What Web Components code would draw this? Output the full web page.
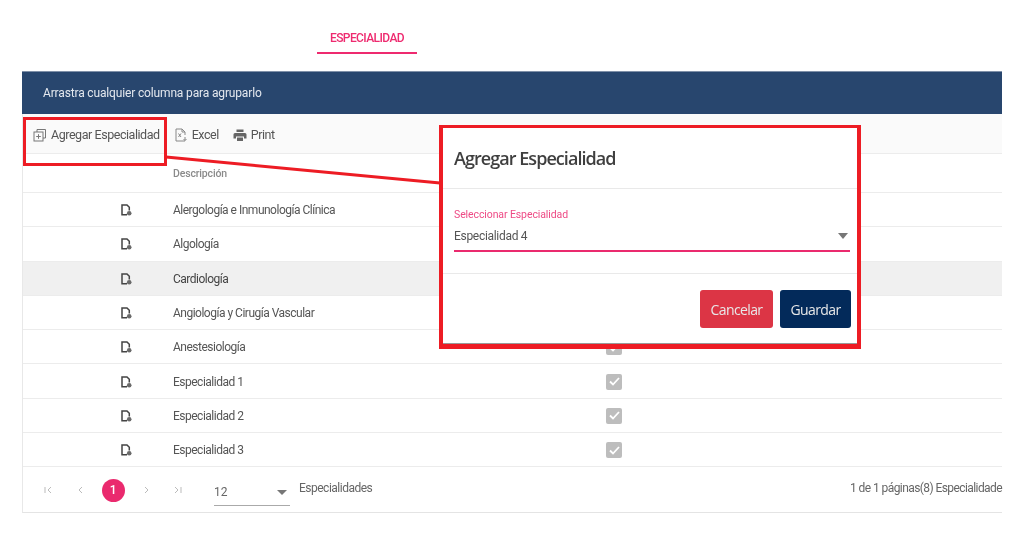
<!DOCTYPE html>
<html lang="es">
<head>
<meta charset="utf-8">
<title>Especialidad</title>
<style>
  html, body { margin: 0; background: #fff; }
  body { width: 1024px; height: 538px; overflow: hidden; position: relative; font-family: Roboto, "Liberation Sans", sans-serif; filter: blur(0.35px); }
</style>
</head>
<body>
<page-tabs label="ESPECIALIDAD"></page-tabs>
<data-grid>
  <grid-row name="Alergología e Inmunología Clínica"></grid-row>
  <grid-row name="Algología"></grid-row>
  <grid-row name="Cardiología" selected></grid-row>
  <grid-row name="Angiología y Cirugía Vascular"></grid-row>
  <grid-row name="Anestesiología"></grid-row>
  <grid-row name="Especialidad 1"></grid-row>
  <grid-row name="Especialidad 2"></grid-row>
  <grid-row name="Especialidad 3"></grid-row>
</data-grid>
<add-dialog></add-dialog>
<call-out></call-out>

<script>
class PageTabs extends HTMLElement {
  constructor() {
    super();
    this.attachShadow({ mode: 'open' });
    this.shadowRoot.innerHTML = `
      <style>
        :host { display: flex; height: 71px; padding-left: 317px; box-sizing: border-box; }
        .tab {
          width: 100px;
          height: 54px;
          box-sizing: border-box;
          padding-top: 31px;
          text-align: center;
          font: 500 12px/15px Roboto, sans-serif;
          letter-spacing: -0.6px;
          color: #ee2a6f;
          border-bottom: 2px solid #ee2a6f;
        }
      </style>
      <div class="tab">${this.getAttribute('label')}</div>
    `;
  }
}
customElements.define('page-tabs', PageTabs);

class DataGrid extends HTMLElement {
  constructor() {
    super();
    this.attachShadow({ mode: 'open' });
    this.shadowRoot.innerHTML = `
      <style>
        :host {
          display: block;
          width: 980px;
          margin-left: 22px;
          box-sizing: border-box;
          border-left: 1px solid #e8e8e8;
          border-bottom: 1px solid #e4e4e4;
          color: #555;
          font: 12px Roboto, sans-serif;
        }
        .group {
          height: 43px;
          box-sizing: border-box;
          margin-left: -1px;
          padding: 0 0 1px 21px;
          display: flex;
          align-items: center;
          background: #28466e;
          border-top: 1px solid #7f90a8;
          letter-spacing: -0.15px;
          color: #e4e8ee;
        }
        .toolbar {
          height: 40px;
          box-sizing: border-box;
          display: flex;
          align-items: center;
          padding: 2px 0 0 10px;
          background: #fafafa;
          border-bottom: 1px solid #ececec;
          font-size: 12.5px;
          letter-spacing: -0.45px;
          color: #555;
        }
        .tool { display: flex; align-items: center; gap: 4px; }
        .tool svg { display: block; }
        .tool.add { margin-right: 14px; }
        .tool.excel { margin-right: 14px; }
        .head {
          height: 39px;
          box-sizing: border-box;
          padding: 13px 0 0 150px;
          border-bottom: 1px solid #ececec;
          font-size: 10.5px;
          font-weight: 500;
          letter-spacing: -0.15px;
          color: #8a8a8a;
        }
      </style>
      <div class="group">Arrastra cualquier columna para agruparlo</div>
      <div class="toolbar">
        <div class="tool add">
          <svg width="14" height="14" viewBox="0 0 14 14" fill="none" stroke="#777" stroke-width="1">
            <rect x="1" y="4" width="9" height="9"/>
            <path d="M4 4V1.5h8.5V10H10M3.2 8.5h4.6M5.500 6.200v4.600"/>
          </svg>
          Agregar Especialidad
        </div>
        <div class="tool excel">
          <svg width="14" height="14" viewBox="0 0 14 14" fill="none" stroke="#888" stroke-width="1">
            <path d="M2 1h6l3 3v3M2 1v12h9M8 1v3h3M4.500 5.500l2.500 3.500M7 5.500l-2.500 3.500M11 9v3.500M9.500 11l1.500 1.500 1.500-1.500"/>
          </svg>
          Excel
        </div>
        <div class="tool print">
          <svg width="14" height="14" viewBox="0 0 14 14" fill="#666">
            <path d="M3.500 1.500h7v2.500h-7zM2 5h10a1.500 1.500 0 0 1 1.500 1.500V10.500h-2.500V8.500H3v2H.5V6.500A1.500 1.500 0 0 1 2 5zM4 9.500h6V13H4z"/>
          </svg>
          Print
        </div>
      </div>
      <div class="head">Descripción</div>
      <slot></slot>
      <grid-pager></grid-pager>
    `;
  }
}
customElements.define('data-grid', DataGrid);

class GridRow extends HTMLElement {
  constructor() {
    super();
    this.attachShadow({ mode: 'open' });
    this.shadowRoot.innerHTML = `
      <style>
        :host {
          display: grid;
          grid-template-columns: 150px 433px 1fr;
          align-items: center;
          height: 34.3px;
          box-sizing: border-box;
          padding-top: 1px;
          border-bottom: 1px solid #ececec;
          font-size: 12px;
          letter-spacing: -0.5px;
          color: #555;
        }
        :host([selected]) { background: #f0f0f0; color: #444; }
        .doc { justify-self: end; margin-right: 41px; display: block; }
        .check {
          width: 16px;
          height: 16px;
          border-radius: 2px;
          background: #bdbdbd;
          display: flex;
          align-items: center;
          justify-content: center;
        }
      </style>
      <svg class="doc" width="11" height="12" viewBox="0 0 11 12" fill="none">
        <path d="M6 10.700H1V1H6L8.300 3.300V6.500" stroke="#444" stroke-width="1.500"/>
        <circle cx="8.200" cy="9.300" r="2.300" fill="#6a6a6a"/>
      </svg>
      <div>${this.getAttribute('name')}</div>
      <div class="check">
        <svg width="11" height="9" viewBox="0 0 11 9" fill="none"><path d="M1 4.500l3 3 6-6.500" stroke="#fff" stroke-width="1.800"/></svg>
      </div>
    `;
  }
}
customElements.define('grid-row', GridRow);

class GridPager extends HTMLElement {
  constructor() {
    super();
    this.attachShadow({ mode: 'open' });
    this.shadowRoot.innerHTML = `
      <style>
        :host {
          display: flex;
          align-items: center;
          height: 45px;
          box-sizing: border-box;
          padding-left: 9px;
          font-size: 12px;
          color: #666;
        }
        .nav { display: grid; grid-template-columns: repeat(5, 32.5px); justify-items: center; align-items: center; }
        .nav svg { display: block; }
        .page {
          width: 23px;
          height: 23px;
          margin-top: 1px;
          border-radius: 50%;
          background: #ea2a6e;
          color: #fff;
          font-weight: 500;
          display: flex;
          align-items: center;
          justify-content: center;
        }
        .size {
          width: 76px;
          height: 26px;
          margin: 6px 9px 0 19.5px;
          box-sizing: border-box;
          border-bottom: 1px solid #aaa;
          display: flex;
          align-items: center;
          justify-content: space-between;
          padding-right: 3px;
        }
        .size i { width: 0; height: 0; border: 5px solid transparent; border-top: 5px solid #777; border-bottom: 0; }
        .label { margin-top: -4px; letter-spacing: -0.5px; }
        .info { margin-left: auto; margin-top: -4px; white-space: nowrap; letter-spacing: -0.58px; }
      </style>
      <div class="nav">
        <svg width="10" height="10" viewBox="0 0 10 10" fill="none" stroke="#bbb"><path d="M2 2v6M8 2L5 5l3 3"/></svg>
        <svg width="10" height="10" viewBox="0 0 10 10" fill="none" stroke="#bbb"><path d="M6 2L3 5l3 3"/></svg>
        <div class="page">1</div>
        <svg width="10" height="10" viewBox="0 0 10 10" fill="none" stroke="#bbb"><path d="M4 2l3 3-3 3"/></svg>
        <svg width="10" height="10" viewBox="0 0 10 10" fill="none" stroke="#bbb"><path d="M2 2l3 3-3 3M8 2v6"/></svg>
      </div>
      <div class="size">12<i></i></div>
      <div class="label">Especialidades</div>
      <div class="info">1 de 1 páginas(8) Especialidade</div>
    `;
  }
}
customElements.define('grid-pager', GridPager);

class AddDialog extends HTMLElement {
  constructor() {
    super();
    this.attachShadow({ mode: 'open' });
    this.shadowRoot.innerHTML = `
      <style>
        :host {
          position: absolute;
          left: 439px;
          top: 125px;
          width: 422px;
          height: 224px;
          box-sizing: border-box;
          border: 4px solid #ed1c24;
          border-top-width: 3px;
          border-bottom-width: 5px;
          background: #fff;
          box-shadow: inset 0 -1px #999;
          display: flex;
          flex-direction: column;
          color: #444;
        }
        .title {
          height: 61px;
          flex: none;
          box-sizing: border-box;
          padding: 0 0 1px 11px;
          border-bottom: 1px solid #e9e9e9;
          display: flex;
          align-items: center;
          font: 600 18px "Open Sans", sans-serif;
          letter-spacing: -0.95px;
          color: #3f3f3f;
        }
        .body {
          height: 85px;
          flex: none;
          box-sizing: border-box;
          padding: 19px 7px 0 11px;
          border-bottom: 1px solid #e9e9e9;
        }
        .select { border-bottom: 2px solid #ea2a6e; height: 44px; box-sizing: border-box; }
        .select label { display: block; font: 10.5px/13px Roboto, sans-serif; letter-spacing: -0.1px; color: #ee4a85; }
        .value {
          display: flex;
          justify-content: space-between;
          align-items: center;
          margin-top: 7px;
          font: 12px/16px Roboto, sans-serif;
          letter-spacing: -0.3px;
          color: #555;
        }
        .value i { width: 0; height: 0; border: 5px solid transparent; border-top: 6px solid #777; border-bottom: 0; margin-right: 2px; }
        .foot {
          flex: 1;
          display: flex;
          justify-content: flex-end;
          gap: 7px;
          padding: 16px 6px 0 0;
        }
        button {
          height: 38px;
          border: 0;
          border-radius: 3px;
          padding: 0;
          color: #e8e8e8;
          font: 14px "Open Sans", sans-serif;
          letter-spacing: -0.6px;
        }
        .cancel { width: 73px; background: #dc3545; }
        .save { width: 71px; background: #032a5a; }
      </style>
      <div class="title">Agregar Especialidad</div>
      <div class="body">
        <div class="select">
          <label>Seleccionar Especialidad</label>
          <div class="value">Especialidad 4<i></i></div>
        </div>
      </div>
      <div class="foot">
        <button class="cancel">Cancelar</button>
        <button class="save">Guardar</button>
      </div>
    `;
  }
}
customElements.define('add-dialog', AddDialog);

class CallOut extends HTMLElement {
  constructor() {
    super();
    this.attachShadow({ mode: 'open' });
    this.shadowRoot.innerHTML = `
      <style>
        :host { position: absolute; left: 0; top: 0; width: 1024px; height: 538px; pointer-events: none; }
        .box { position: absolute; left: 23px; top: 117px; width: 144px; height: 49px; box-sizing: border-box; border: 3px solid #ed1c24; }
        svg { position: absolute; left: 0; top: 0; }
      </style>
      <div class="box"></div>
      <svg width="1024" height="538"><path d="M166 157L440 183" stroke="#ed1c24" stroke-width="3" fill="none"/></svg>
    `;
  }
}
customElements.define('call-out', CallOut);
</script>
</body>
</html>
